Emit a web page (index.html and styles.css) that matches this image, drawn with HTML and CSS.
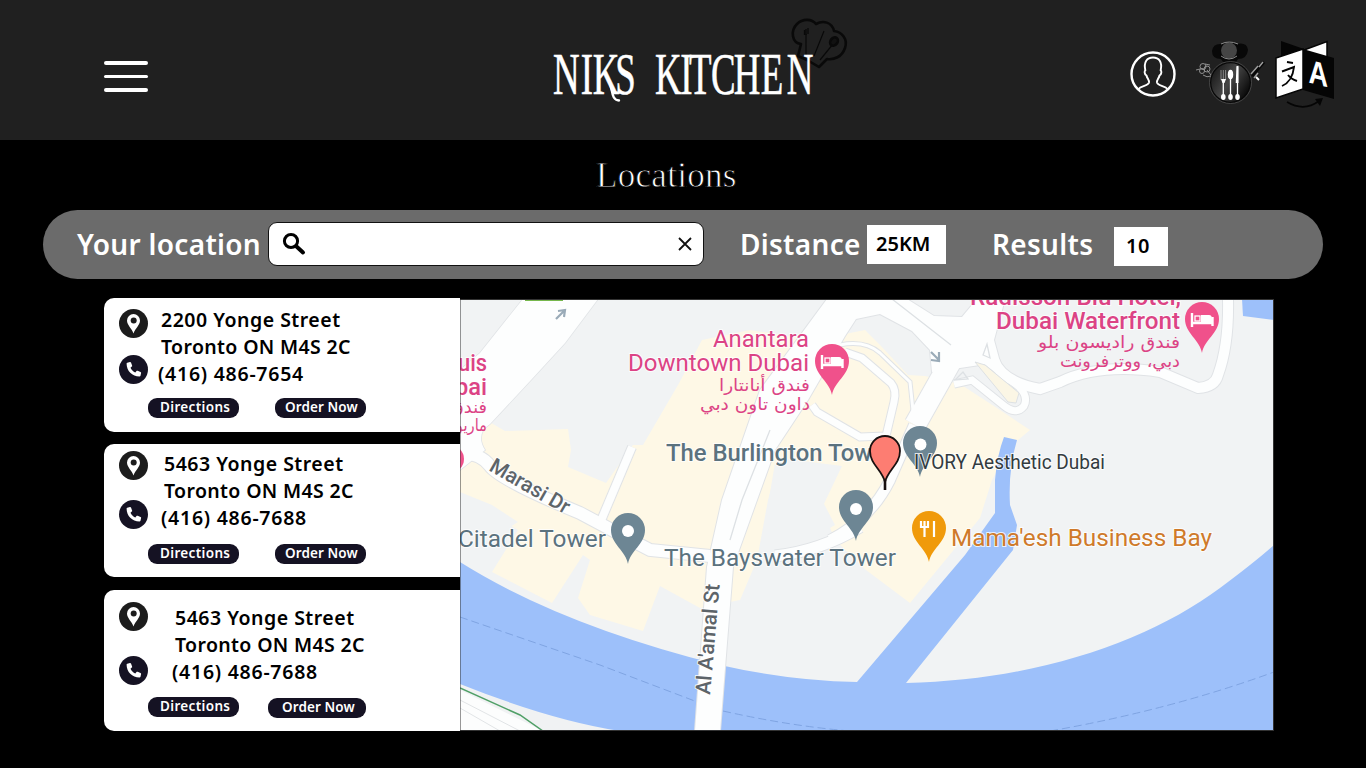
FILE: index.html
```html
<!DOCTYPE html>
<html lang="en">
<head>
<meta charset="utf-8">
<title>Niks Kitchen - Locations</title>
<link rel="stylesheet" href="styles.css">
</head>
<body>
<svg class="defs" width="0" height="0" aria-hidden="true">
  <defs>
    <symbol id="place" viewBox="0 0 29 29">
      <circle cx="14.5" cy="14.5" r="14.5" fill="#1c1c1c"/>
      <path d="M14.5 24.5C13 20 8 16 8 11.6a6.5 6.5 0 0 1 13 0c0 4.400-5 8.400-6.500 12.900z" fill="#fff"/>
      <circle cx="14.700" cy="11.400" r="3" fill="#1c1c1c"/>
    </symbol>
    <symbol id="phone" viewBox="0 0 29 29">
      <circle cx="14.500" cy="14.500" r="14.500" fill="#151223"/>
      <path d="M8.300 7.800l2.600-.8c.5-.1.900.1 1.100.6l1.100 2.800c.2.500.1.800-.3 1.200l-1.300 1.200c.9 2.100 2.700 3.800 4.800 4.700l1.200-1.400c.3-.4.700-.5 1.200-.3l2.800 1.200c.5.200.7.600.6 1.100l-.6 2.700c-.1.500-.5.700-1 .7C13.100 21.500 7.600 16 7.600 8.800c0-.5.200-.9.700-1z" fill="#fff"/>
    </symbol>
    <path id="pin" d="M0 34C-2 21-17 14-17 0A17 17 0 0 1 17 0C17 14 2 21 0 34z"/>
    <g id="bed">
      <path d="M-10-6V8M-10 4H10M10.500 7V-2" fill="none" stroke="#fff" stroke-width="2.400"/>
      <path d="M-1-4H7Q10-4 10 0V3H-1z" fill="#fff"/>
      <rect x="-7" y="-3" width="5" height="5" fill="none" stroke="#fff" stroke-width="1.300"/>
    </g>
  </defs>
</svg>

<header class="header">
  <button class="menu" aria-label="Menu"><i></i><i></i><i></i></button>
  <svg class="logo" viewBox="540 0 320 140">
    <g fill="none" stroke="#090909" stroke-width="2.600" stroke-linejoin="round">
      <path d="M798 56L801 44C792 43 790 31 797 24C803 18 812 19 816 24C823 20 832 22 834 31C842 32 848 39 845 48C842 57 834 60 827 59L819 67C813 63 806 59 798 56z"/>
      <path d="M806 56V34M814 56L824 31M820 60L833 44" stroke-width="1.200"/>
      <path d="M804.500 30v5M808 28v6M806 29v6" stroke-width="1.300"/>
      <ellipse cx="834" cy="41.500" rx="3.500" ry="4.500" transform="rotate(38 834 41.500)" fill="#111"/>
    </g>
    <g class="wordmark">
      <text transform="translate(553 94) scale(.63 1)" x="0 44 63 99">NIKS</text>
      <text transform="translate(655 94) scale(.63 1)" x="0 40 54 89 125 168 209">KITCHEN</text>
      <path d="M609 80C613 90 611 100 619 100.500" fill="none" stroke="#fff" stroke-width="2.400" stroke-linecap="round"/>
    </g>
  </svg>
  <div class="tools">
    <svg class="user" viewBox="0 0 46 46" fill="none" stroke="#fff">
      <circle cx="23" cy="23" r="21.500" stroke-width="2.400"/>
      <path d="M8.500 38C11 35 18 35 19 31.500C19.500 29 17 27.500 16.500 24.500C14 23 14.500 20 15.300 19.300C13.500 11 17 6.500 23 6.500S32.500 11 30.700 19.300C31.500 20 32 23 29.500 24.500C29 27.500 26.500 29 27 31.500C28 35 35 35 37.500 38" stroke-width="1.900"/>
    </svg>
    <svg class="dish" viewBox="1192 36 76 72">
      <defs>
        <linearGradient id="plate" x1="0" y1="0" x2="1" y2=".6">
          <stop offset="0" stop-color="#0c0c0c"/><stop offset=".55" stop-color="#464646"/><stop offset="1" stop-color="#0c0c0c"/>
        </linearGradient>
      </defs>
      <path d="M1221 59Q1212 59 1212 51Q1213 43 1222 44Q1229 39 1237 44Q1247 42 1248 50Q1247 59 1238 59L1236 62H1223z" fill="#080808"/>
      <circle cx="1229" cy="50.500" r="8" fill="#454545"/>
      <path d="M1221 44Q1229 40 1238 44M1221 56Q1229 62 1237 56" fill="none" stroke="#969696" stroke-width=".9"/>
      <circle cx="1230.500" cy="82.500" r="20" fill="url(#plate)" stroke="#080808" stroke-width="1.500"/>
      <circle cx="1230.500" cy="82.500" r="21" fill="none" stroke="#505050" stroke-width=".8"/>
      <g fill="none" stroke="#8a8a8a" stroke-width="1">
        <path d="M1221 70v10M1223.300 70v10M1225.600 70v10"/>
        <path d="M1223.300 79v20M1230.500 78v21M1237.500 67v32" stroke="#fff" stroke-width="1.300"/>
      </g>
      <g fill="#fff">
        <ellipse cx="1230.500" cy="74.500" rx="2.700" ry="4.800"/>
        <path d="M1236.500 66h2v17h-2.800z"/>
        <path d="M1221 79h5l-1.500 4h-2z"/>
        <ellipse cx="1223.300" cy="97" rx="2.300" ry="3"/><ellipse cx="1230.500" cy="97" rx="2.300" ry="3"/><ellipse cx="1237.500" cy="97" rx="2.300" ry="3"/>
      </g>
      <g fill="none" stroke="#9a9a9a" stroke-width=".9">
        <circle cx="1203" cy="66.500" r="3"/><circle cx="1207" cy="69" r="3"/><circle cx="1202" cy="71" r="2.500"/>
        <path d="M1196 70l4-1M1205 64l5 1M1203 75q4 3 8 1M1207 70l4 5"/>
      </g>
      <path d="M1252 76L1264 62" stroke="#080808" stroke-width="3"/>
      <path d="M1251 74L1258 66M1254 78l4-5M1259 67l4-5" stroke="#a0a0a0" stroke-width="1.400"/>
      <path d="M1256 77l3 3" stroke="#fff" stroke-width="2"/>
    </svg>
    <svg class="translate" viewBox="1274 38 62 72">
      <path d="M1281 41L1304 49V70H1281z" fill="#050505"/>
      <path d="M1304 50L1327 41.500V58L1304 63z" fill="#fff" stroke="#050505" stroke-width="1.500"/>
      <path d="M1303 49L1334 58V99L1303 90z" fill="#050505"/>
      <path d="M1276 58L1303 49V89L1276 98z" fill="#fff" stroke="#050505" stroke-width="1.500"/>
      <path d="M1287 62l6 1M1282 71.500l12-4.500C1293 76 1289 83 1282 86M1288 75C1291 79 1294 80 1297 81" fill="none" stroke="#050505" stroke-width="1.900"/>
      <text class="letter" transform="matrix(.82 .2 0 1 1308.500 82.500)" x="0" y="0">A</text>
      <path d="M1287 102Q1304 112 1319 101" fill="none" stroke="#050505" stroke-width="1.700"/>
      <path d="M1315 99l8-1-3 8z" fill="#050505"/>
    </svg>
  </div>
</header>

<main>
  <h1 class="title">Locations</h1>

  <form class="filters">
    <label class="label your-location">Your location</label>
    <div class="search">
      <svg class="magnifier" viewBox="0 0 24 24" fill="none" stroke="#000" stroke-linecap="round">
        <circle cx="9" cy="9" r="6.600" stroke-width="3"/><path d="M14.500 14.500L21 20.500" stroke-width="4"/>
      </svg>
      <svg class="clear" viewBox="0 0 14 14"><path d="M1 1L13 13M13 1L1 13" stroke="#111" stroke-width="1.800"/></svg>
    </div>
    <label class="label distance">Distance</label>
    <div class="value km">25KM</div>
    <label class="label results">Results</label>
    <div class="value count">10</div>
  </form>

  <div class="content">
    <section class="cards">
      <article class="card first">
        <div class="info">
          <div class="icons"><svg><use href="#place"/></svg><svg><use href="#phone"/></svg></div>
          <div class="lines"><p class="street-line">2200 Yonge Street</p><p>Toronto ON M4S 2C</p><p class="tel">(416) 486-7654</p></div>
        </div>
        <div class="actions"><a class="pill">Directions</a><a class="pill order">Order Now</a></div>
      </article>
      <article class="card second">
        <div class="info">
          <div class="icons"><svg><use href="#place"/></svg><svg><use href="#phone"/></svg></div>
          <div class="lines"><p class="street-line">5463 Yonge Street</p><p>Toronto ON M4S 2C</p><p class="tel">(416) 486-7688</p></div>
        </div>
        <div class="actions"><a class="pill">Directions</a><a class="pill order">Order Now</a></div>
      </article>
      <article class="card third">
        <div class="info">
          <div class="icons"><svg><use href="#place"/></svg><svg><use href="#phone"/></svg></div>
          <div class="lines"><p class="street-line">5463 Yonge Street</p><p>Toronto ON M4S 2C</p><p class="tel">(416) 486-7688</p></div>
        </div>
        <div class="actions"><a class="pill">Directions</a><a class="pill order">Order Now</a></div>
      </article>
    </section>

    <svg class="map" viewBox="460 299 814 432">
      <rect x="460" y="299" width="814" height="432" fill="#f1f3f4"/>
      <g fill="#fef8e6">
        <path d="M486 420L505 431L568 429L571 450L568 467L606 483L633 445L643 445L678 385L702 340L750 330L815 340L865 330L880 345L908 375L925 376L960 384L1000 410L1030 430L1012 445L992 480L980 518L910 603L866 570L835 540L822 508L842 466L780 458L768 500L757 560L740 600L700 608L660 586L643 631L590 615L578 598L590 560L583 555L552 603L492 572L518 530L460 495V445z"/>
        <path d="M868 342L905 375L900 430L865 440L800 430L812 400z"/>
      </g>
      <path d="M455 490L492 505L518 522L505 530L455 530z" fill="#f1f3f4"/>
      <path d="M775 463L840 466L822 500L835 525L790 552L760 552z" fill="#f1f3f4"/>
      <path d="M460 686L545 715L620 731H460z" fill="#f0f2f3"/>
      <path d="M460 690L543 731H460z" fill="#fcfdfd"/>
      <path d="M460 708L500 731M460 700L520 731" stroke="#e1e4e6" fill="none"/>
      <g fill="#9dc0fa">
        <path d="M460 562Q560 625 720 665Q790 681 857 682L965 555L995 513L995 480Q997 455 1004 437L1017 440Q1008 470 1010 505L1017 525L1013 550L906 683C1040 680 1150 640 1220 588Q1255 562 1274 545V731H620Q550 720 460 684z"/>
        <path d="M1242 299H1274V320L1243 316z"/>
      </g>
      <path d="M460 617L600 665L700 703M723 711Q790 726 850 731M1050 731Q1170 710 1274 672" fill="none" stroke="#7fa4e2" stroke-dasharray="8 4"/>
      <path d="M460 688L520 715L543 731" fill="none" stroke="#4f9f66" stroke-width="1.500"/>

      <g class="road-edge">
        <path d="M523 299H598L565 343L531 380L490 424Q475 434 485 450L460 470V370L480 353z" stroke-width="1.500" fill="#e0e3e6"/>
        <path d="M452 452Q480 452 490 466T580 513L625 537L650 550L710 556" stroke-width="14"/>
        <path d="M632 447L600 523" stroke-width="10"/>
        <path d="M830 540Q870 520 890 480L914 425" stroke-width="12"/>
        <path d="M775 556Q820 551 860 527" stroke-width="13"/>
        <path d="M812 405L817 412L860 437L886 436L894 402Q897 390 891 383L862 358L845 352" stroke-width="9"/>
        <path d="M840 345Q865 340 880 353L910 382L914 420" stroke-width="5"/>
        <path d="M994 360Q1002 382 1040 389L1060 382Q1100 363 1160 372L1198 388Q1215 387 1218 375Q1229 345 1228 299" stroke-width="12"/>
        <path d="M954 384L972 380L1003 405Q1016 416 1024 406Q1029 396 1018 386L980 356" stroke-width="9"/>
        <path d="M827 299L760 390L722 500L707 567L695 731H720L733 567L757 500L775 450L808 400L845 336L856 319L880 314L912 331L930 350L932 372L960 368L1000 362L994 340L1005 299H977L962 317L934 316L907 299z" stroke-width="2" fill="#e0e3e6"/>
        <path d="M960 345L915 425" stroke-width="23"/>
      </g>
      <g class="road">
        <path d="M523 299H598L565 343L531 380L490 424Q475 434 485 450L460 470V370L480 353z" fill="#fdfefe" stroke="none"/>
        <path d="M452 452Q480 452 490 466T580 513L625 537L650 550L710 556" stroke-width="12"/>
        <path d="M632 447L600 523" stroke-width="8"/>
        <path d="M830 540Q870 520 890 480L914 425" stroke-width="10"/>
        <path d="M775 556Q820 551 860 527" stroke-width="11"/>
        <path d="M812 405L817 412L860 437L886 436L894 402Q897 390 891 383L862 358L845 352" stroke-width="7"/>
        <path d="M840 345Q865 340 880 353L910 382L914 420" stroke-width="3"/>
        <path d="M994 360Q1002 382 1040 389L1060 382Q1100 363 1160 372L1198 388Q1215 387 1218 375Q1229 345 1228 299" stroke-width="10"/>
        <path d="M954 384L972 380L1003 405Q1016 416 1024 406Q1029 396 1018 386L980 356" stroke-width="7"/>
        <path d="M827 299L760 390L722 500L707 567L695 731H720L733 567L757 500L775 450L808 400L845 336L856 319L880 314L912 331L930 350L932 372L960 368L1000 362L994 340L1005 299H977L962 317L934 316L907 299z" fill="#fdfefe" stroke="none"/>
        <path d="M960 345L915 425" stroke-width="21"/>
      </g>
      <path d="M975 362L985 365L1019 393L1016 403L1008 402z" fill="#fbf6e5" stroke="#dde1e4"/>
      <path d="M770 430L742 500L730 540M892 299L951 345M955 380L963 372L968 379zM983 355L987 344L990 358z" fill="none" stroke="#dde1e4" stroke-width="1.300"/>
      <path d="M525 299H563V301H525z" fill="#76b74c"/>
      <g fill="none" stroke="#9aabb8" stroke-width="2.200"><path d="M556 319L564 311M558 311L565 310L564 317M931 352L939 360M939 352V361L931 360"/></g>

      <circle cx="450" cy="459" r="14" fill="#f0518b"/>
      <g transform="translate(832 361)"><use href="#pin" fill="#f0518b"/><use href="#bed"/></g>
      <g transform="translate(1202 319)"><use href="#pin" fill="#f0518b"/><use href="#bed"/></g>
      <g fill="#6d8694">
        <use href="#pin" x="628" y="530"/><use href="#pin" x="856" y="507"/><use href="#pin" x="920" y="443"/>
      </g>
      <g fill="#fff"><circle cx="628" cy="531" r="6"/><circle cx="856" cy="509" r="6"/><circle cx="920.500" cy="444.500" r="6"/></g>
      <use href="#pin" x="929" y="528" fill="#f09a0a"/>
      <path d="M921 521v6h7v-6M924.500 521v16M934 521v16" fill="none" stroke="#fff" stroke-width="2.200"/>

      <g class="place pink">
        <text x="713" y="346.500" textLength="96" lengthAdjust="spacingAndGlyphs">Anantara</text>
        <text x="628" y="370.500" textLength="181" lengthAdjust="spacingAndGlyphs">Downtown Dubai</text>
        <text class="bold" x="970" y="305" textLength="211" lengthAdjust="spacingAndGlyphs">Radisson Blu Hotel,</text>
        <text class="bold" x="996" y="329" textLength="184" lengthAdjust="spacingAndGlyphs">Dubai Waterfront</text>
        <text class="bold" x="458" y="370.500" textLength="29" lengthAdjust="spacingAndGlyphs">uis</text>
        <text class="bold" x="455" y="395" textLength="32" lengthAdjust="spacingAndGlyphs">bai</text>
      </g>
      <g class="arabic pink">
        <text x="810" y="391" textLength="91" lengthAdjust="spacingAndGlyphs">فندق أنانتارا</text>
        <text x="810" y="410" textLength="110" lengthAdjust="spacingAndGlyphs">داون تاون دبي</text>
        <text x="1180" y="348" textLength="142" lengthAdjust="spacingAndGlyphs">فندق راديسون بلو</text>
        <text x="1180" y="367" textLength="120" lengthAdjust="spacingAndGlyphs">دبي، ووترفرونت</text>
        <text x="487" y="413" textLength="37" lengthAdjust="spacingAndGlyphs">فندق</text>
        <text x="487" y="431" textLength="45" lengthAdjust="spacingAndGlyphs">ماريوت</text>
      </g>
      <g class="place slate">
        <text class="bold" x="666" y="460.500" textLength="206" lengthAdjust="spacingAndGlyphs">The Burlington Tow</text>
        <text x="664" y="566" textLength="232" lengthAdjust="spacingAndGlyphs">The Bayswater Tower</text>
        <text x="458" y="547" textLength="148" lengthAdjust="spacingAndGlyphs">Citadel Tower</text>
      </g>
      <text class="place orange" x="951" y="546" textLength="261" lengthAdjust="spacingAndGlyphs">Mama'esh Business Bay</text>
      <text class="place dark" x="914" y="469" textLength="191" lengthAdjust="spacingAndGlyphs">IVORY Aesthetic Dubai</text>
      <text class="place street" transform="translate(488 470) rotate(30)" textLength="89" lengthAdjust="spacingAndGlyphs">Marasi Dr</text>
      <text class="place street" transform="translate(710 695) rotate(-85)" textLength="111" lengthAdjust="spacingAndGlyphs">Al A'amal St</text>
      <path d="M885 489V482C882 470 870 464 870 451A15 15 0 0 1 900 451C900 464 888 470 885 482" fill="#fd7d72" stroke="#181010" stroke-width="1.800"/>
      <path d="M885 480V490" stroke="#181010" stroke-width="2.600"/>
      <path d="M460 731V299M460 299.500H1274M1273.500 299V731M460 730.500H1274" fill="none" stroke="#333" stroke-width="1"/>
    </svg>
  </div>
</main>
</body>
</html>
```

FILE: styles.css
```css
* { box-sizing: border-box; }
body {
  margin: 0;
  width: 1366px;
  height: 768px;
  overflow: hidden;
  background: #000;
  font-family: "Noto Sans", "Open Sans", sans-serif;
  font-weight: 600;
}
p, h1 { margin: 0; }
svg { display: block; flex: none; }
.defs { position: absolute; }

.header { display: flex; height: 140px; padding-left: 104px; background: #202020; }
.menu {
  display: flex;
  flex-direction: column;
  gap: 10px;
  width: 44px;
  padding: 61px 0 0;
  border: 0;
  background: none;
}
.menu i { width: 44px; height: 3.500px; border-radius: 2px; background: #fff; }
.logo { width: 320px; height: 140px; margin-left: 392px; }
.wordmark text { font: 58.500px "Liberation Serif", serif; fill: #fff; stroke: #fff; stroke-width: .6px; }
.tools { display: flex; margin-left: 270px; }
.user { width: 46px; height: 46px; margin-top: 51px; }
.dish { width: 76px; height: 72px; margin: 36px 0 0 16px; }
.translate { width: 62px; height: 72px; margin: 38px 0 0 6px; }
.letter { font: bold 33px "Liberation Sans", sans-serif; fill: #fff; }

.title {
  height: 70px;
  padding-left: 596px;
  font: 35px/72px "Liberation Serif", serif;
  letter-spacing: .3px;
  color: #fff;
  -webkit-text-stroke: .8px #000;
}

.filters {
  display: flex;
  height: 69px;
  margin: 0 43px;
  padding-left: 34px;
  border-radius: 35px;
  background: #6b6b6b;
}
.label { font-size: 28px; line-height: 68px; letter-spacing: .3px; color: #fff; white-space: nowrap; }
.your-location { width: 191px; }
.search {
  display: flex;
  justify-content: space-between;
  align-items: center;
  width: 436px;
  height: 44px;
  margin-top: 12px;
  padding: 0 11px 0 13px;
  border: 1px solid #111;
  border-radius: 9px;
  background: #fff;
}
.magnifier { width: 24px; height: 24px; }
.clear { width: 14px; height: 14px; }
.distance { width: 127px; margin-left: 36px; }
.value { height: 39px; background: #fff; color: #000; font-size: 20px; line-height: 38px; }
.km { width: 79px; margin-top: 15px; padding-left: 9px; }
.results { width: 122px; margin-left: 46px; }
.count { width: 54px; margin-top: 17px; padding-left: 12px; letter-spacing: .5px; }

.content { display: flex; padding: 19px 0 0 104px; }
.cards { display: flex; flex-direction: column; gap: 12px; width: 356px; }
.card { border-radius: 10px 0 0 10px; background: #fff; color: #000; }
.first { height: 134px; }
.second { height: 133px; }
.third { height: 141px; margin-top: 1px; }
.info { display: flex; height: 100px; padding-left: 15px; }
.third .info { height: 107px; }
.icons { display: flex; flex-direction: column; gap: 17px; padding-top: 11px; }
.second .icons { gap: 20px; padding-top: 7px; }
.third .icons { gap: 25px; padding-top: 12px; }
.icons svg { width: 29px; height: 29px; }
.lines { padding: 8px 0 0 13px; font-size: 19.500px; line-height: 27px; letter-spacing: .35px; white-space: nowrap; }
.second .lines { padding: 6px 0 0 16px; }
.third .lines { padding: 14px 0 0 27px; }
.lines .street-line { letter-spacing: .5px; }
.lines .tel { margin-left: -3px; letter-spacing: .75px; }
.actions { display: flex; gap: 36px; padding-left: 44px; }
.pill {
  width: 91px;
  height: 20px;
  padding-left: 12px;
  border-radius: 9px;
  background: #151223;
  color: #fff;
  font-size: 13.500px;
  line-height: 18px;
  letter-spacing: .35px;
  white-space: nowrap;
}
.order { padding-left: 10px; letter-spacing: .1px; }
.third .actions { gap: 29px; }
.third .order { width: 98px; margin-top: 1px; padding-left: 14px; }

.map { width: 814px; height: 432px; margin-top: 1px; overflow: hidden; }
.road-edge { fill: none; stroke: #e0e3e6; }
.road { fill: none; stroke: #fdfefe; }
.place {
  font: 24px Roboto, sans-serif;
  paint-order: stroke;
  stroke: rgba(255, 255, 255, .8);
  stroke-width: 2px;
}
.bold { font-weight: 500; }
.pink { fill: #dc4385; }
.slate { fill: #5b727e; }
.orange { fill: #cf7a2a; }
.dark { font-size: 19.500px; fill: #333b40; }
.street { font-size: 21px; font-weight: 500; fill: #5d6469; }
.arabic { font: 17px "DejaVu Sans", sans-serif; direction: rtl; }
```
